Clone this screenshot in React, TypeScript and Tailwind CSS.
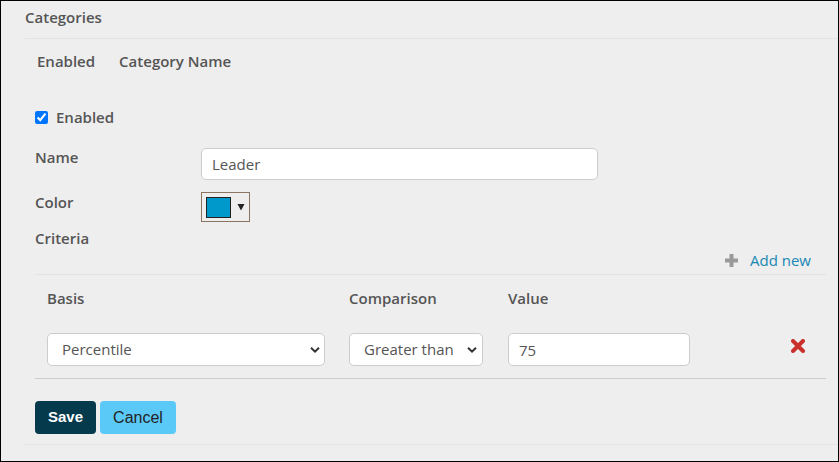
import React from "react";

const Chevron = () => (
  <svg width="10" height="7" viewBox="0 0 10 7" className="pointer-events-none absolute top-1/2 -translate-y-1/2" style={{ right: 0 }}>
    <path d="M1 1.2 L5 5.2 L9 1.2" fill="none" stroke="#333" strokeWidth="2" />
  </svg>
);

function FakeSelect({ value, width, chevRight }: { value: string; width: string; chevRight: string }) {
  return (
    <div className={`relative ${width} h-[33px]`}>
      <select
        defaultValue={value}
        className="h-full w-full appearance-none rounded-[5px] border border-[#cccccc] bg-white pl-[14px] text-[15px] text-[#555555] outline-none font-['Open_Sans',sans-serif]"
      >
        <option>{value}</option>
      </select>
      <div className={`pointer-events-none absolute top-0 h-full w-[10px] ${chevRight}`}>
        <Chevron />
      </div>
    </div>
  );
}

export default function App() {
  return (
    <div className="w-[839px] h-[462px] overflow-hidden border border-black bg-[#eeeeee] font-['Open_Sans',sans-serif] text-[#555555]">
      <div className="pl-[24px]">
        <div className="h-[38px] border-b border-[#e3e3e3] pt-[6px] text-[15px] font-semibold leading-[20px]">
          Categories
        </div>
        <div className="border-b border-[#e3e3e3]">
          <div className="flex h-[44px] items-center gap-[24px] pl-[12px] text-[15px] font-semibold">
            <span>Enabled</span>
            <span>Category Name</span>
          </div>
          <div className="ml-[10px] mr-[12px] pb-[10px]">
            <div className="mt-[19px] flex h-[30px] items-center">
              <input type="checkbox" defaultChecked className="h-[13px] w-[13px] accent-[#0075ff]" />
              <span className="ml-[8px] text-[15px] font-semibold">Enabled</span>
            </div>
            <div className="mt-[16px] flex h-[32px] items-start">
              <div className="w-[166px] -mt-[1px] text-[15px] font-semibold leading-[20px]">Name</div>
              <input
                defaultValue="Leader"
                className="h-[32px] w-[397px] rounded-[5px] border border-[#cccccc] bg-white pl-[10px] text-[15px] text-[#555555] outline-none"
              />
            </div>
            <div className="mt-[12px] flex h-[30px] items-start">
              <div className="w-[166px] text-[15px] font-semibold leading-[20px]">Color</div>
              <div className="flex h-[30px] w-[49px] items-center border border-[#8c7461] pl-[4px]">
                <div className="h-[21px] w-[25px] border border-[#222222] bg-[#0099cc]" />
                <svg width="8" height="8" viewBox="0 0 8 8" className="ml-[6px]">
                  <polygon points="0.5,1 7.5,1 4,7.5" fill="#222222" />
                </svg>
              </div>
            </div>
            <div className="mt-[6px] h-[20px] text-[15px] font-semibold leading-[20px]">Criteria</div>
            <div className="flex h-[27px] items-center justify-end border-b border-[#e3e3e3] pr-[15px] pb-[1px]">
              <svg width="13" height="13" viewBox="0 0 13 13" className="mr-[12px]">
                <rect x="4.5" y="0" width="4" height="13" fill="#999999" />
                <rect x="0" y="4.5" width="13" height="4" fill="#999999" />
              </svg>
              <span className="text-[15px] text-[#1a87b5]">Add new</span>
            </div>
            <div className="flex h-[46px] items-center pl-[12px] text-[15px] font-semibold">
              <span className="w-[302px]">Basis</span>
              <span className="w-[159px]">Comparison</span>
              <span>Value</span>
            </div>
            <div className="flex items-center border-b border-[#cccccc] pl-[12px] pt-[12px] pb-[12px]">
              <FakeSelect value="Percentile" width="w-[278px]" chevRight="right-[5px]" />
              <div className="ml-[24px]">
                <FakeSelect value="Greater than" width="w-[134px]" chevRight="right-[6px]" />
              </div>
              <input
                defaultValue="75"
                className="ml-[25px] h-[33px] w-[182px] rounded-[5px] border border-[#cccccc] bg-white pl-[10px] text-[15px] text-[#555555] outline-none"
              />
              <svg width="14" height="14" viewBox="0 0 14 14" className="ml-[101px] -mt-[8px]">
                <path d="M2 2 L12 12 M12 2 L2 12" stroke="#c9302c" strokeWidth="4" strokeLinecap="round" />
              </svg>
            </div>
            <div className="mt-[22px] flex gap-[4px]">
              <button className="h-[33px] w-[61px] rounded-[4px] bg-[#053a4d] text-[15px] font-bold text-white font-['Liberation_Sans',Arial,sans-serif]">
                Save
              </button>
              <button className="h-[33px] w-[76px] rounded-[4px] bg-[#5bc9f7] text-[16px] text-[#222222] font-['Liberation_Sans',Arial,sans-serif]">
                Cancel
              </button>
            </div>
          </div>
        </div>
      </div>
    </div>
  );
}
